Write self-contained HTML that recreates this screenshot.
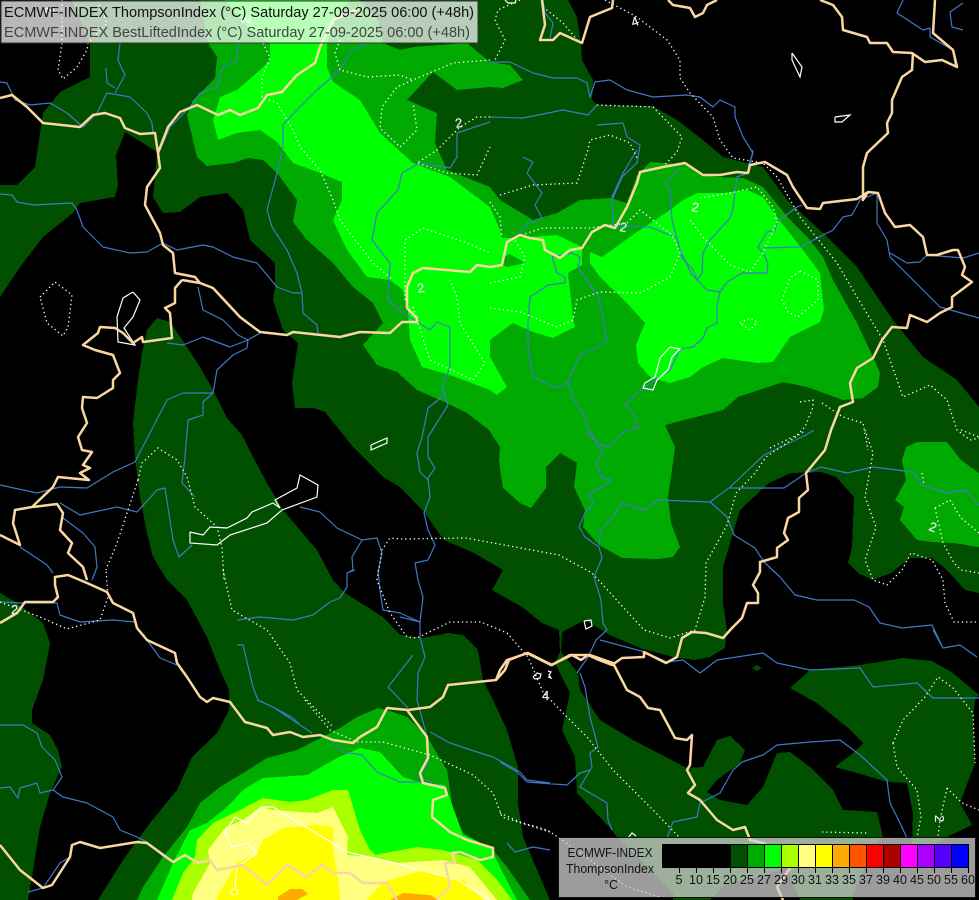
<!DOCTYPE html>
<html><head><meta charset="utf-8"><style>
html,body{margin:0;padding:0;background:#000}
svg{display:block}
text{font-family:"Liberation Sans",sans-serif}
</style></head><body>
<svg width="979" height="900" viewBox="0 0 979 900" xmlns="http://www.w3.org/2000/svg">
<rect width="979" height="900" fill="#005000"/>
<g fill="#000" shape-rendering="crispEdges">
<polygon points="0,0 72,0 90,43 90,77 60,92 43,113 35,167 17,185 0,185"/>
<polygon points="125,132 116,155 118,185 115,197 80,203 73,213 43,237 20,267 0,297 0,593 17,603 43,623 50,643 43,680 32,710 32,723 50,735 58,750 62,767 50,793 40,827 32,877 28,900 98,900 123,860 150,823 177,790 192,757 217,733 229,710 229,690 220,670 207,637 187,600 167,580 153,557 147,533 140,497 135,457 133,423 138,380 142,353 147,330 157,318 170,322 187,347 200,367 213,390 227,418 242,435 253,457 267,483 283,510 300,530 317,550 333,580 345,593 383,617 400,635 422,638 448,633 463,635 478,650 483,680 493,700 507,730 518,767 518,803 523,837 550,900 673,900 673,893 617,837 612,830 577,793 575,757 562,730 570,693 555,663 560,652 559,630 542,623 522,607 492,590 503,570 474,553 444,540 424,512 400,487 383,477 353,447 325,412 313,408 295,408 292,383 298,343 283,330 273,300 275,287 275,263 250,240 243,210 227,193 200,197 180,212 163,213 153,197 157,152"/>
<polygon points="568,0 577,17 581,43 582,60 593,80 592,100 597,105 653,106 677,120 703,140 723,157 743,162 763,167 787,200 823,233 857,267 893,320 923,357 957,380 979,407 979,0"/>
<polygon points="561,652 562,632 585,620 610,635 640,648 673,657 695,660 710,657 725,648 727,630 723,603 723,567 740,510 769,483 791,473 821,472 836,477 854,497 852,547 848,563 858,573 873,580 891,573 910,558 932,558 947,570 965,590 979,593 979,695 953,673 932,661 903,658 860,665 810,670 790,688 817,703 847,727 863,743 853,753 835,767 857,773 887,782 907,783 913,813 912,845 930,848 947,837 972,825 960,803 975,763 973,717 975,700 979,695 979,900 853,900 853,893 867,863 880,837 883,837 877,812 843,810 833,790 810,767 790,752 777,753 763,787 747,805 720,800 707,792 717,780 740,763 745,750 730,736 717,740 703,767 687,768 633,740 600,720 580,690 578,673"/>
<polygon points="710,900 727,883 760,877 787,867 800,900"/>
</g>
<g shape-rendering="crispEdges">
<polygon fill="#005000" points="752,668 757,665 762,668 757,671"/>
<polygon fill="#00aa00" points="200,0 208,43 217,57 215,78 193,100 187,115 197,157 207,166 233,163 248,158 263,160 277,173 297,200 293,222 307,240 333,263 353,287 373,303 383,323 363,345 377,365 397,372 417,390 447,403 467,413 489,430 500,447 499,462 503,488 520,503 531,508 546,488 546,467 560,453 577,463 574,487 585,510 583,527 599,545 622,558 658,559 673,557 680,547 671,523 668,497 673,463 675,447 665,425 723,410 738,397 783,382 807,387 843,400 863,398 878,387 880,373 873,357 857,323 833,280 823,257 810,240 790,220 763,187 743,178 717,177 703,175 687,165 650,162 637,175 627,203 610,198 580,200 557,213 533,220 500,200 490,187 447,170 435,143 437,113 407,100 433,72 457,90 490,87 503,88 523,80 510,65 490,62 467,43 413,47 400,50 383,43 378,20 360,0"/>
<polygon fill="#00aa00" points="917,442 947,442 961,460 979,473 979,547 954,543 932,542 917,540 900,520 904,507 895,500 906,480 902,460 906,447"/>
<polygon fill="#00ff00" points="225,0 250,30 270,43 270,60 260,70 237,90 220,97 213,120 218,140 237,133 260,130 277,142 293,163 320,173 342,182 342,200 333,220 347,250 367,277 390,280 403,290 408,310 410,340 422,367 450,375 490,390 497,395 507,387 490,357 490,340 513,323 533,332 553,338 575,327 573,317 568,273 582,265 582,247 557,235 515,238 502,238 500,230 490,207 450,177 413,163 380,133 360,100 333,82 327,67 327,43 335,20 350,0"/>
<polygon fill="#00aa00" points="503,257 510,254 525,263 507,267 501,265"/>
<polygon fill="#00ff00" points="590,252 602,257 637,232 670,210 683,200 697,193 723,193 747,190 763,197 777,217 803,250 820,273 824,310 820,322 790,337 773,362 757,363 723,358 703,367 690,377 670,383 650,377 638,363 636,345 645,323 627,303 600,277 590,263"/>
<polygon fill="#00aa00" points="378,708 357,717 340,728 297,750 267,758 243,773 220,787 200,803 187,827 163,857 143,887 137,900 530,900 507,867 493,850 463,833 453,810 447,770 427,737 407,717 387,710"/>
<polygon fill="#00ff00" points="360,748 337,758 307,775 263,778 243,790 227,807 207,823 190,830 173,863 157,900 517,900 500,867 490,847 463,835 445,785 423,783 403,777 380,752"/>
<polygon fill="#aaff00" points="348,790 333,790 307,800 290,802 263,798 240,810 213,823 197,840 195,857 183,873 172,900 512,900 497,880 477,860 443,850 417,847 375,855 370,850 360,830"/>
<polygon fill="#ffff80" points="333,807 317,813 273,810 260,807 243,820 225,828 208,850 210,863 193,893 192,900 497,900 470,867 443,860 395,863 373,857 347,855 348,837"/>
<polygon fill="#ffff00" points="317,825 283,828 263,840 257,853 237,863 217,897 217,900 340,900 338,877 333,850 333,827"/>
<polygon fill="#ffff00" points="367,900 383,882 423,870 463,880 483,900"/>
<polygon fill="#ffaa00" points="278,897 290,889 302,889 308,894 297,900 278,900"/>
<polygon fill="#ffaa00" points="390,900 403,893 430,895 438,900"/>
</g>
<!-- rivers -->
<path fill="none" stroke="#4078c4" stroke-width="1.2" stroke-linejoin="round" d="M0,82 7,83 15,100 30,105 50,103 67,113 83,127 97,113 107,93 130,97 147,113 152,123 153,132
M0,194 12,195 17,202 33,205 72,203 77,210 83,227 103,247 130,253 147,252 163,243 177,250 203,245 213,247 233,257 257,263 267,275 277,287 293,293 302,293 303,313 317,325 318,333
M120,43 118,60 125,75 115,93 M106,68 107,83 115,88
M238,43 237,60 223,67 217,87 200,93 190,107 170,127 160,150
M367,43 350,52 340,70 317,90 297,110 283,125 283,147 277,173 267,210 272,227 287,250 297,273 302,293
M490,122 457,133 457,157 450,168 420,163 402,173 398,190 377,213 372,240 390,263 388,300 403,313 430,330 437,322 450,327 450,367 442,387 448,405 428,437 428,457 435,468 428,478 430,497 424,513 428,530 435,545 428,560 415,563 418,580 423,597 420,622 420,637 425,657 418,673 417,700 428,740 428,763 418,777 433,783
M447,393 428,408 422,437 417,453 420,472 428,480
M413,655 388,687 408,708
M237,620 260,617 293,620 313,615 330,602 340,598 347,587 347,573 355,570
M237,645 243,645 253,687 258,700 273,707 293,718 300,725 312,733
M378,570 380,590 383,610 400,613 420,622
M333,742 343,752 362,755 377,772 400,782 420,782 445,787
M507,843 515,852 533,847 550,850
M257,700 273,707 312,733 M430,732 450,743 477,752 493,757 520,772 527,780 550,783
M500,762 517,772 527,782 567,785 580,773 590,770
M580,673 585,687 590,717 598,747 590,753 592,767 580,787 607,803 608,820 612,830
M667,838 673,822 697,817 700,803 720,793 733,770 742,762 763,755 777,745 810,742 840,740 860,755 887,780 890,803 900,823 907,838
M600,640 645,652 667,662 683,660 700,673 717,660 763,653 777,663 810,670 860,668 873,687 917,683 933,698 979,698
M933,630 943,648 960,645 977,657
M523,157 533,162 527,173 542,193 535,205 542,218 525,225 517,237
M753,150 748,173 737,177 733,208 730,218 710,240 703,253 702,273 697,280 692,275 680,250 672,220 670,190 666,183 680,168
M637,150 623,173 612,197 613,225 650,227 677,238 682,258 692,268 697,280 707,290 720,292 717,305 717,323 707,328 703,338 693,347 680,349 670,370 655,380 637,393 625,405 633,413 638,427 622,433 608,447 602,445 590,437 585,417 573,398 568,382
M720,292 727,282 742,273 767,273 768,263 763,253 758,247 767,232 775,230 777,222 797,207 802,205
M763,248 800,247 833,230 843,217 852,215 860,200 877,193 877,223 887,240 890,257 910,277 940,307 979,318
M890,253 907,263 920,262 927,255 963,258 979,253
M552,257 557,273 565,277 565,283 548,285 530,297 528,323 528,347 533,377 557,388 568,382 580,355 607,342 602,313 598,297 578,267 580,257 572,253 552,257
M590,430 596,443 603,453 596,462 601,477 612,480 588,495 594,502 585,513 579,527 585,537 599,547 602,558 594,577 601,600 603,623 607,630 596,640 588,657 577,673
M622,503 644,510 658,500 710,502 729,488 784,488 806,473 821,467 847,473 873,467 913,472 922,485 947,493 965,490 979,505
M622,503 612,518 601,530 599,545
M710,502 727,517 734,535 755,548 764,562 780,577 795,595 817,600 854,600 869,607 880,623 902,628 932,625 943,648
M729,488 764,455 806,435 814,430
M400,617 420,622
M490,62 510,62 533,73 553,78 577,78 587,83 590,97 595,82 610,80 627,90 653,97 687,95 700,97 713,107 720,100 735,107 735,117 743,137 753,153 748,167
M490,117 523,118 563,110 588,115 597,105
M597,125 623,123 627,137 640,145 637,163 622,177 612,200
M543,0 545,13 553,23 550,38
M903,0 897,13 923,30 930,28 930,37 953,50 955,65
M963,3 950,12 952,27 963,30
M198,287 203,310 223,320 238,335 248,340 247,348 233,355 217,370 213,393 203,402 203,415 188,420 185,457 182,483 195,497
M213,393 183,393 167,400 153,427 135,462 113,472 87,488 60,487 37,493 0,485
M260,333 248,340 230,347 203,337 183,345 167,343
M60,503 80,515 117,507 137,512 157,490 165,488 173,540 179,557 192,545
M63,518 83,533 95,547 97,567 92,580
M20,547 47,565 53,573
M300,507 320,512 337,528 362,540 377,538 382,553 378,573
M362,540 352,557 353,570 347,573
M0,725 23,725 37,733 42,747 55,760 62,777 53,790 63,797 87,803 113,817 120,830 137,837 147,842 165,858
M0,788 10,787 18,798 20,788 37,783 40,793 53,790
M0,602 23,603 57,603 60,615 80,622 113,620 135,622
M147,640 160,658 177,665 M28,892 43,888 60,863 70,857"/>
<!-- dotted contours -->
<path fill="none" stroke="#fff" stroke-width="1.3" stroke-dasharray="1.3 3" d="M605,0 637,17 667,40 680,60 680,78 690,93 713,117 720,140 733,158 763,163 777,177 800,217 837,263 857,297 883,340 903,397 930,385 947,400 957,430 970,440 979,438
M520,0 498,10 495,20 505,40 495,60
M543,7 563,23 580,43
M500,195 533,185 577,183 588,150 590,140 610,135 630,143 637,158
M597,105 653,107 682,137 677,152 663,167
M490,60 453,63 413,80 397,87 382,107 380,128 400,147 417,130 413,103
M340,40 335,53 340,70 367,77 400,75 413,80
M490,117 477,117 460,127 437,150 417,163 447,173 477,175 490,147
M263,43 270,58 262,77 262,97 277,103 293,130 300,147 320,170 333,200 340,220 353,237 373,263 393,280
M405,300 405,240 423,228 467,243 490,253
M413,307 430,360 473,380 485,363 460,323 457,297 450,280
M490,283 520,277 525,257 515,240
M490,308 520,312 557,327 573,320 577,300 600,292 640,293 670,277 680,253 672,235 640,210 627,223 590,228 543,228 515,237
M490,202 500,217 502,237
M690,220 703,237 730,265 750,272 763,253 777,222 773,207 757,187 730,193 700,198
M800,271 818,280 818,300 798,317 788,312 782,300 790,278 800,271
M740,323 750,318 757,322 750,330 740,323
M800,402 813,400 813,407 805,427 797,435 770,448
M822,403 843,417 863,423 868,450
M865,430 873,453 865,497 876,527 865,560 873,580 887,585 902,570 911,553 932,560 943,580 945,603 954,622 979,622
M922,473 924,485 M935,508 950,500 961,518 979,533 M935,508 943,543 954,563 961,570 979,573
M961,430 979,437
M803,432 766,457 755,473 736,493 727,525 706,563 705,597 695,630 670,638 644,630 592,573 559,555 466,538 400,539 390,538 382,550 377,580 378,583 390,613 407,637 417,638 450,622 481,622 507,633 528,657 543,692 563,713 587,737 613,770 653,810 680,838
M893,743 897,767 917,790 921,817 917,837 M893,743 903,720 925,697 938,677 953,688 973,713 975,763
M947,788 940,820 938,837 M947,788 962,803 979,810
M822,832 867,833
M500,813 520,822 547,830 558,837 627,887 660,897
M305,700 330,730 357,742 383,742 430,755 473,775 493,793 502,817 550,832
M223,570 232,610 267,630 290,663 297,690 333,727
M0,602 40,617 67,629 100,620 108,597 106,570
M138,480 127,513 117,543 107,567 106,570
M138,480 142,463 158,448 177,460 187,477 195,507 217,527 222,547 224,580
M40,297 55,282 72,295 68,327 63,336 47,323 40,297
M62,0 62,43 58,70 63,79 77,67 87,50 88,43 107,23 97,0"/>
<!-- white lakes/lines -->
<path fill="none" stroke="#fff" stroke-width="1.2" d="M190,532 203,535 210,527 227,528 247,518 252,512 273,503 280,508 275,500 297,488 300,475 318,485 317,497 282,510 267,523 230,535 217,545 190,543 190,532
M133,292 140,300 133,317 124,328 135,345 118,342 117,317 123,298 133,292
M371,445 387,438 387,443 371,450 371,445
M792,53 802,67 800,77 792,60 792,53
M835,117 850,115 842,122 835,122 835,117
M670,347 680,349 672,357 668,370 657,380 653,390 643,388 645,383 655,377 660,358 670,347
M584,621 591,620 592,626 586,629 584,621
M533,677 537,673 541,674 540,678 535,679 533,677 M548,671 551,672 549,675 551,678 548,677
M505,0 508,3 515,3 516,0
M628,838 632,833 636,836
M225,832 235,817 247,823 262,807 273,807 347,852 395,863 458,880 490,900
M225,832 232,847 247,843 257,853 237,867 235,888"/>
<ellipse cx="234" cy="892" rx="4" ry="3" fill="none" stroke="#fff"/>
<!-- borders -->
<path fill="none" stroke="#fad7a0" stroke-width="2.5" stroke-linejoin="round" d="M0,98 12,95 27,107 43,123 80,127 93,115 105,113 120,118 125,128 140,134 155,133 158,153 160,168 147,187 145,205 160,233 163,245 173,253 175,273 195,277 200,283 213,288 240,317 260,332 287,335 293,332 340,337 360,332 390,333 402,322 417,322 417,318 407,308 407,287 413,273 423,268 470,272 477,265 490,267 502,265 507,242 520,235 530,238 543,240 545,250 560,258 570,250 582,248 592,232 605,225 615,228 627,207 637,183 640,172 663,167 685,163 703,175 720,175 737,172 748,173 750,165 765,162 787,175 793,187 807,208 820,209 823,203 857,199 868,192 878,193 885,213 895,227 910,225 923,237 927,255 937,255 953,250 958,250 965,267 962,275 972,282 952,297 952,307 940,313 927,322 910,315 907,328 892,327 882,340 873,358 857,368 850,383 853,402 840,407 833,425 831,430 825,450 806,473 808,490 799,498 799,512 788,518 784,533 788,540 777,548 777,557 760,562 760,572 753,585 758,593 758,603 747,603 742,618 732,628 723,638 706,633 692,632 682,638 677,657 666,663 644,652 644,657 622,658 612,665 599,660 588,655 581,660 572,655 551,665 527,653 509,660 505,670 496,680 448,685 443,697 430,707 408,710 387,708 377,727 360,737 353,743 333,740 320,735 303,737 290,732 273,735 267,728 245,722 230,702 213,698 207,702 200,697 187,677 177,663 175,653 147,640 137,628 133,613 113,603 107,592 87,583 68,575 55,577 55,585 58,597 53,602 25,602 17,613 0,623
M613,0 612,8 590,17 582,43 560,33 553,40 540,40 545,25 542,0
M360,8 333,20 320,47 315,63 297,75 282,92 267,95 258,108 240,115 230,110 218,115 197,105 180,112 168,127 158,153
M668,0 673,5 690,8 695,17 703,13 707,5 717,0
M820,0 833,5 842,17 843,30 867,37 870,43 887,43 893,52 912,53 925,62 942,60 957,67 953,50 933,33 935,0
M913,53 912,70 902,77 892,100 892,113 887,123 888,133 867,153 863,167 863,200 868,192
M182,280 175,288 175,303 165,308 170,313 172,338 143,342 142,337 133,343 123,333 115,328 100,327 98,333 83,345 95,350 113,355 118,368 120,373 113,380 113,388 97,398 83,397 82,408 87,423 78,437 82,450 92,452 83,465 90,468 80,473 89,480 58,477 53,487 32,507 15,510 13,523 20,545 0,535
M33,507 57,504 63,513 60,530 72,543 68,553 83,567 87,580
M200,283 182,280
M0,845 20,870 43,888 52,885 70,857 72,845 80,842 100,848 137,842 147,843 173,862 185,855 198,863 210,860 217,870 243,865 267,885 287,865 307,877 322,865 333,873 350,873 363,883 387,883 397,900
M407,710 427,737 428,758 420,773 423,783 445,788 447,795 433,800 432,817 450,832 467,840 493,848 493,857 480,860 460,852 452,853 455,863 445,863 450,887 437,900
M496,680 500,670 507,660 528,653 552,665 570,655 590,655 613,663 627,690 640,697 648,708 660,710 675,738 687,740 692,735 690,765 687,770 695,785 688,793 700,800 717,820 733,830 745,827 750,840 763,843 777,850 790,868 777,887 783,900"/>
<!-- contour labels -->
<g fill="#e8e8e8" font-size="13" stroke="#e8e8e8" stroke-width=".25">
<text transform="translate(456,128) rotate(-10)">2</text>
<text transform="translate(418,293) rotate(-10)">2</text>
<text transform="translate(691,211) rotate(10)">2</text>
<text transform="translate(619,231) rotate(10)">2</text>
<text transform="translate(928,530) rotate(20)">2</text>
<text transform="translate(935,815) rotate(90)">2</text>
<text transform="translate(633,27) rotate(-20)">4</text>
<text transform="translate(542,700)">4</text>
<text transform="translate(11,614)">2</text>
<text transform="translate(54,14) rotate(-90)">2</text>
<text transform="translate(250,24) rotate(-90)">2</text>
</g>
<!-- top legend -->
<rect x="1" y="1" width="477" height="42" fill="#fff" fill-opacity=".72" stroke="#333" stroke-width="1"/>
<text x="4" y="17" font-size="15" fill="#111" textLength="470" lengthAdjust="spacingAndGlyphs">ECMWF-INDEX ThompsonIndex (°C) Saturday 27-09-2025 06:00 (+48h)</text>
<text x="4" y="37" font-size="15" fill="#444" textLength="466" lengthAdjust="spacingAndGlyphs">ECMWF-INDEX BestLiftedIndex (°C) Saturday 27-09-2025 06:00 (+48h)</text>
<!-- bottom legend -->
<rect x="558.5" y="837.5" width="417" height="60" fill="#d0d0d0" fill-opacity=".75" stroke="#111" stroke-width="1"/>
<g shape-rendering="crispEdges">
<rect x="662" y="844" width="68" height="23" fill="#000"/>
<rect x="730" y="844" width="17" height="23" fill="#005000"/>
<rect x="747" y="844" width="17" height="23" fill="#00aa00"/>
<rect x="764" y="844" width="17" height="23" fill="#00ff00"/>
<rect x="781" y="844" width="17" height="23" fill="#aaff00"/>
<rect x="798" y="844" width="17" height="23" fill="#ffff80"/>
<rect x="815" y="844" width="17" height="23" fill="#ffff00"/>
<rect x="832" y="844" width="17" height="23" fill="#ffaa00"/>
<rect x="849" y="844" width="17" height="23" fill="#ff5500"/>
<rect x="866" y="844" width="17" height="23" fill="#ff0000"/>
<rect x="883" y="844" width="17" height="23" fill="#aa0000"/>
<rect x="900" y="844" width="17" height="23" fill="#ff00ff"/>
<rect x="917" y="844" width="17" height="23" fill="#aa00ff"/>
<rect x="934" y="844" width="17" height="23" fill="#5500ff"/>
<rect x="951" y="844" width="17" height="23" fill="#0000ff"/>
<path fill="none" stroke="#000" stroke-width="1" d="M662.5,844.5H968.5V867.5H662.5Z M679.5,844V873 M696.5,844V873 M713.5,844V873 M730.5,844V873 M747.5,844V873 M764.5,844V873 M781.5,844V873 M798.5,844V873 M815.5,844V873 M832.5,844V873 M849.5,844V873 M866.5,844V873 M883.5,844V873 M900.5,844V873 M917.5,844V873 M934.5,844V873 M951.5,844V873 M968.5,844V873"/>
</g>
<g font-size="12.5" fill="#111" text-anchor="middle">
<text x="610" y="857" textLength="85" lengthAdjust="spacingAndGlyphs">ECMWF-INDEX</text>
<text x="610" y="873" textLength="88" lengthAdjust="spacingAndGlyphs">ThompsonIndex</text>
<text x="611" y="889">°C</text>
<text x="679" y="884">5</text><text x="696" y="884">10</text><text x="713" y="884">15</text><text x="730" y="884">20</text><text x="747" y="884">25</text><text x="764" y="884">27</text><text x="781" y="884">29</text><text x="798" y="884">30</text><text x="815" y="884">31</text><text x="832" y="884">33</text><text x="849" y="884">35</text><text x="866" y="884">37</text><text x="883" y="884">39</text><text x="900" y="884">40</text><text x="917" y="884">45</text><text x="934" y="884">50</text><text x="951" y="884">55</text><text x="968" y="884">60</text>
</g>
</svg>
</body></html>
